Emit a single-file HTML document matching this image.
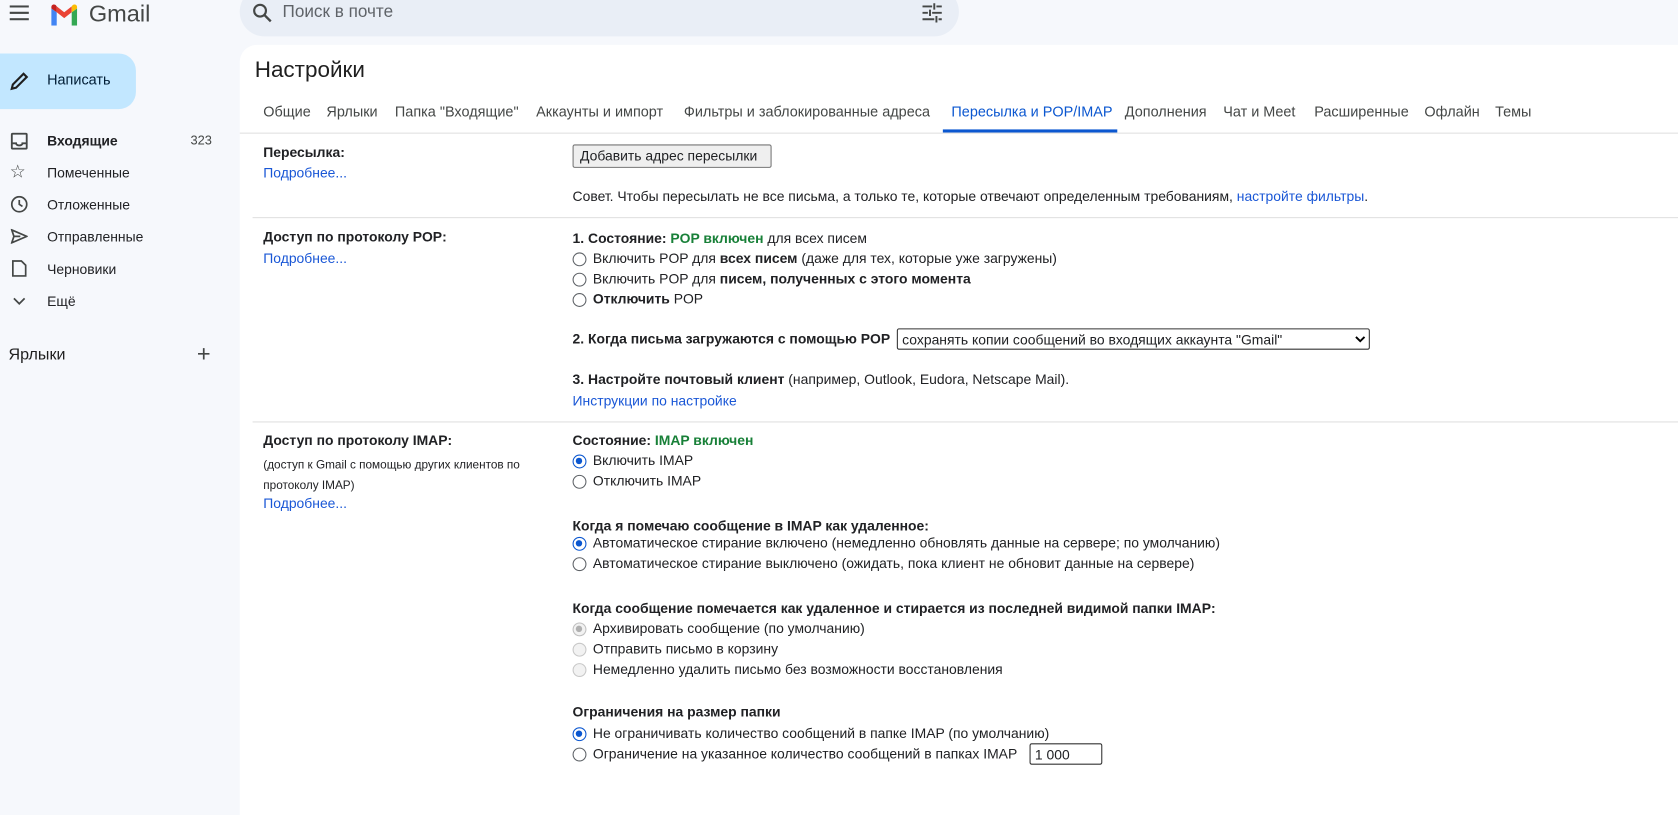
<!DOCTYPE html>
<html><head><meta charset="utf-8"><style>
*{margin:0;padding:0;box-sizing:border-box}
body{width:1678px;height:754px;overflow:hidden;background:#f6f8fc;font-family:"Liberation Sans",Arial,sans-serif;color:#202124;position:relative;font-size:13px}
#w{position:absolute;left:0;top:0;width:1568px;height:705px;transform:scale(1.0702,1.0695);transform-origin:0 0}
.a{position:absolute;white-space:nowrap}
.main{position:absolute;left:224px;top:42px;width:1460px;height:720px;background:#fff;border-radius:16px 0 0 0}
.tab{position:absolute;top:97px;font-size:13.5px;color:#444746}
.b{font-weight:bold}
.lk{color:#1a57d6}
.g{color:#188038;font-weight:bold}
.r{position:absolute;width:13px;height:13px;border:1px solid #5f6368;border-radius:50%;background:#fff}
.r.on{border:1.5px solid #0b57d0}
.r.on::after{content:"";position:absolute;left:2px;top:2px;width:6px;height:6px;border-radius:50%;background:#0b57d0}
.r.dis{border-color:#c8c8c8;background:#f2f2f2}
.r.dis.on::after{background:#b0b0b0}
.r.dis.on{border-color:#c0c0c0}
.sep{position:absolute;left:236px;width:1442px;height:1px;background:#e0e0e0}
.nav{position:absolute;left:44px;font-size:13px;color:#202124}
</style></head><body><div id="w">
<svg class="a" style="left:9px;top:5px" width="18" height="14"><rect y="0" width="18" height="2" fill="#444746"/><rect y="6" width="18" height="2" fill="#444746"/><rect y="12" width="18" height="2" fill="#444746"/></svg>
<svg class="a" style="left:46px;top:3px" width="28" height="21" viewBox="0 0 28 21">
<path d="M2 21h5V8.5L2 5z" fill="#4285f4"/>
<path d="M21 21h5V5l-5 3.5z" fill="#34a853"/>
<path d="M7 8.5L14 14l7-5.5V3L14 8.5 7 3z" fill="#ea4335"/>
<path d="M21 3v5.5L26 5V3.5c0-2-2.3-3-4-1.8z" fill="#fbbc04"/>
<path d="M7 3v5.5L2 5V3.5c0-2 2.3-3 4-1.8z" fill="#c5221f"/>
</svg>
<div class="a" style="left:83px;top:0px;font-size:22px;color:#444746">Gmail</div>
<div class="a" style="left:224px;top:-12px;width:672px;height:46px;background:#e9eef6;border-radius:24px"></div>
<svg class="a" style="left:235px;top:2px" width="20" height="20" viewBox="0 0 20 20"><circle cx="8" cy="8" r="5.5" stroke="#444746" stroke-width="2" fill="none"/><path d="M12 12l6 6" stroke="#444746" stroke-width="2.2"/></svg>
<div class="a" style="left:264px;top:3px;font-size:16px;color:#5f6368">Поиск в почте</div>
<svg class="a" style="left:861px;top:2px" width="20" height="20" viewBox="0 0 20 20" stroke="#444746" stroke-width="1.8"><path d="M1 4h9M14 4h5M1 10h5M10 10h9M1 16h11M16 16h3M12 1v6M8 7v6M14 13v6"/></svg>

<div class="a" style="left:0;top:50px;width:127px;height:52px;background:#c2e7ff;border-radius:0 16px 16px 0"></div>
<svg class="a" style="left:9px;top:67px" width="18" height="18" viewBox="0 0 18 18"><path d="M2 16l1-4L13 2l3 3L6 15z" stroke="#1f1f1f" stroke-width="2" fill="none"/></svg>
<div class="a" style="left:44px;top:67px;font-size:13.5px;color:#001d35">Написать</div>

<svg class="a" style="left:10px;top:124px" width="16" height="16" viewBox="0 0 16 16" fill="none" stroke="#444746" stroke-width="1.8"><rect x="1" y="1" width="14" height="14" rx="1"/><path d="M1 10h4a3 2 0 0 0 6 0h4"/></svg>
<div class="nav b" style="top:124px">Входящие</div><div class="a" style="left:178px;top:124px;font-size:12px;color:#444746">323</div>
<div class="a" style="left:9px;top:151px;font-size:17px;color:#444746">☆</div><div class="nav" style="top:154px">Помеченные</div>
<svg class="a" style="left:10px;top:183px" width="16" height="16" viewBox="0 0 16 16" fill="none" stroke="#444746" stroke-width="1.6"><circle cx="8" cy="8" r="7"/><path d="M8 4v4l3 2"/></svg><div class="nav" style="top:184px">Отложенные</div>
<svg class="a" style="left:10px;top:214px" width="16" height="14" viewBox="0 0 16 14" fill="none" stroke="#444746" stroke-width="1.6"><path d="M1 1l14 6-14 6 2-6z M3 7h6"/></svg><div class="nav" style="top:214px">Отправленные</div>
<svg class="a" style="left:11px;top:243px" width="14" height="16" viewBox="0 0 14 16" fill="none" stroke="#444746" stroke-width="1.6"><path d="M1 1h8l4 4v10H1z"/></svg><div class="nav" style="top:244px">Черновики</div>
<svg class="a" style="left:12px;top:278px" width="12" height="8" viewBox="0 0 12 8" fill="none" stroke="#444746" stroke-width="1.6"><path d="M1 1l5 5 5-5"/></svg><div class="nav" style="top:274px">Ещё</div>
<div class="a" style="left:8px;top:323px;font-size:15px;color:#1f1f1f">Ярлыки</div>
<div class="a" style="left:184px;top:318px;font-size:22px;color:#444746;font-weight:300">+</div>

<div class="main"></div>
<div class="a" style="left:238px;top:54px;font-size:21px;color:#1f1f1f">Настройки</div>
<div class="tab" style="left:246px">Общие</div>
<div class="tab" style="left:305px">Ярлыки</div>
<div class="tab" style="left:369px">Папка "Входящие"</div>
<div class="tab" style="left:501px">Аккаунты и импорт</div>
<div class="tab" style="left:639px">Фильтры и заблокированные адреса</div>
<div class="tab" style="left:889px;color:#0b57d0">Пересылка и POP/IMAP</div>
<div class="tab" style="left:1051px">Дополнения</div>
<div class="tab" style="left:1143px">Чат и Meet</div>
<div class="tab" style="left:1228px">Расширенные</div>
<div class="tab" style="left:1331px">Офлайн</div>
<div class="tab" style="left:1397px">Темы</div>
<div class="a" style="left:881px;top:121px;width:163px;height:3px;background:#0b57d0"></div>
<div class="sep" style="top:124px;left:224px"></div>

<div class="a b" style="left:246px;top:135px">Пересылка:</div>
<div class="a lk" style="left:246px;top:154px">Подробнее...</div>
<div class="a" style="left:535px;top:135px;width:186px;height:22px;border:1px solid #767676;border-radius:2px;background:#efefef;font-size:13px;padding:2px 0 0 6px">Добавить адрес пересылки</div>
<div class="a" style="left:535px;top:176px">Совет. Чтобы пересылать не все письма, а только те, которые отвечают определенным требованиям, <span class="lk">настройте фильтры</span>.</div>
<div class="sep" style="top:203px"></div>

<div class="a b" style="left:246px;top:214px">Доступ по протоколу POP:</div>
<div class="a lk" style="left:246px;top:234px">Подробнее...</div>
<div class="a" style="left:535px;top:215px"><b>1. Состояние: </b><span class="g">POP включен</span> для всех писем</div>
<div class="r" style="left:535px;top:236px"></div><div class="a" style="left:554px;top:234px">Включить POP для <b>всех писем</b> (даже для тех, которые уже загружены)</div>
<div class="r" style="left:535px;top:255px"></div><div class="a" style="left:554px;top:253px">Включить POP для <b>писем, полученных с этого момента</b></div>
<div class="r" style="left:535px;top:274px"></div><div class="a" style="left:554px;top:272px"><b>Отключить</b> POP</div>
<div class="a b" style="left:535px;top:309px">2. Когда письма загружаются с помощью POP</div>
<div class="a" style="left:838px;top:307px;width:442px;height:20px;border:1px solid #333;border-radius:2px;background:#fff;padding:2px 0 0 4px">сохранять копии сообщений во входящих аккаунта "Gmail"</div>
<svg class="a" style="left:1266px;top:314px" width="10" height="7" viewBox="0 0 10 7" fill="none" stroke="#000" stroke-width="1.8"><path d="M1 1l4 4 4-4"/></svg>
<div class="a" style="left:535px;top:347px"><b>3. Настройте почтовый клиент</b> (например, Outlook, Eudora, Netscape Mail).</div>
<div class="a lk" style="left:535px;top:367px">Инструкции по настройке</div>
<div class="sep" style="top:394px"></div>

<div class="a b" style="left:246px;top:404px">Доступ по протоколу IMAP:</div>
<div class="a" style="left:246px;top:426px;font-size:11px;line-height:19px">(доступ к Gmail с помощью других клиентов по<br>протоколу IMAP)</div>
<div class="a lk" style="left:246px;top:463px">Подробнее...</div>
<div class="a" style="left:535px;top:404px"><b>Состояние: </b><span class="g">IMAP включен</span></div>
<div class="r on" style="left:535px;top:425px"></div><div class="a" style="left:554px;top:423px">Включить IMAP</div>
<div class="r" style="left:535px;top:444px"></div><div class="a" style="left:554px;top:442px">Отключить IMAP</div>
<div class="a b" style="left:535px;top:484px">Когда я помечаю сообщение в IMAP как удаленное:</div>
<div class="r on" style="left:535px;top:502px"></div><div class="a" style="left:554px;top:500px">Автоматическое стирание включено (немедленно обновлять данные на сервере; по умолчанию)</div>
<div class="r" style="left:535px;top:521px"></div><div class="a" style="left:554px;top:519px">Автоматическое стирание выключено (ожидать, пока клиент не обновит данные на сервере)</div>
<div class="a b" style="left:535px;top:561px">Когда сообщение помечается как удаленное и стирается из последней видимой папки IMAP:</div>
<div class="r dis on" style="left:535px;top:582px"></div><div class="a" style="left:554px;top:580px">Архивировать сообщение (по умолчанию)</div>
<div class="r dis" style="left:535px;top:601px"></div><div class="a" style="left:554px;top:599px">Отправить письмо в корзину</div>
<div class="r dis" style="left:535px;top:620px"></div><div class="a" style="left:554px;top:618px">Немедленно удалить письмо без возможности восстановления</div>
<div class="a b" style="left:535px;top:658px">Ограничения на размер папки</div>
<div class="r on" style="left:535px;top:680px"></div><div class="a" style="left:554px;top:678px">Не ограничивать количество сообщений в папке IMAP (по умолчанию)</div>
<div class="r" style="left:535px;top:699px"></div><div class="a" style="left:554px;top:697px">Ограничение на указанное количество сообщений в папках IMAP</div>
<div class="a" style="left:962px;top:695px;width:68px;height:20px;border:1px solid #333;border-radius:2px;background:#fff;padding:2px 0 0 4px">1 000</div>
</div></body></html>
